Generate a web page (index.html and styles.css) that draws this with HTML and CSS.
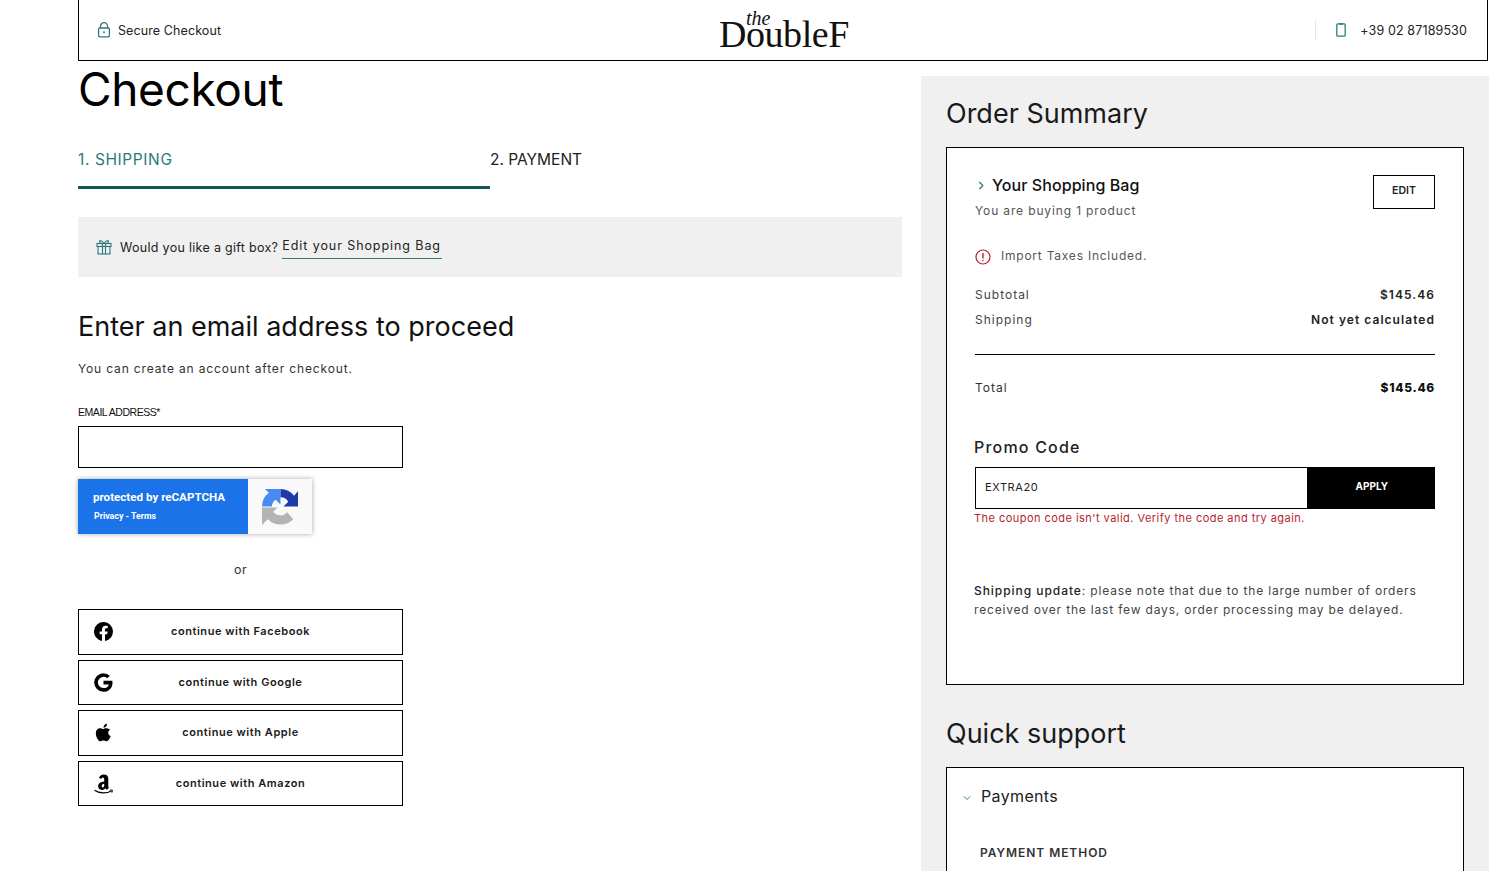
FILE: index.html
```html
<!DOCTYPE html>
<html lang="en">
<head>
<meta charset="utf-8">
<title>Checkout</title>
<link rel="stylesheet" href="styles.css">
</head>
<body>
<div class="page">
  <header class="topbar">
    <div class="secure">
      <svg class="ico-lock" viewBox="0 0 14 16" width="14" height="16"><path d="M3.5 6V4.2a3.5 3.5 0 0 1 7 0V6" fill="none" stroke="#2f7a7a" stroke-width="1.3"/><rect x="1.6" y="6" width="10.8" height="8.8" rx="1" fill="none" stroke="#2f7a7a" stroke-width="1.3"/><circle cx="7" cy="10.3" r="1" fill="#2f7a7a"/></svg>
      <span>Secure Checkout</span>
    </div>
    <div class="logo"><span class="logo-the">the</span><span class="logo-main">DoubleF</span></div>
    <div class="phone">
      <svg class="ico-phone" viewBox="0 0 10 14" width="10" height="14"><rect x="0.8" y="0.8" width="8.4" height="12.4" rx="1" fill="none" stroke="#2f7a7a" stroke-width="1.3"/><path d="M3 1h4" stroke="#2f7a7a" stroke-width="1.5"/></svg>
      <span>+39 02 87189530</span>
    </div>
  </header>

  <div class="columns">
    <main class="left">
      <h1 class="title">Checkout</h1>
      <nav class="tabs">
        <div class="tab tab-active">1. SHIPPING</div>
        <div class="tab">2. PAYMENT</div>
      </nav>
      <div class="gift">
        <svg viewBox="0 0 16 16" width="16" height="16"><g fill="none" stroke="#2f7a7a" stroke-width="1.1"><rect x="1" y="4.5" width="14" height="3"/><rect x="2" y="7.5" width="12" height="7.5"/><path d="M6.5 4.5V15M9.5 4.5V15"/><path d="M8 4.5C6 1 3.5 1 3.5 2.8S6 4.5 8 4.5zM8 4.5c2-3.5 4.500-3.500 4.500-1.700S10 4.500 8 4.500z"/></g></svg>
        <span class="gift-q">Would you like a gift box?</span>
        <a class="gift-link">Edit your Shopping Bag</a>
      </div>
      <h2 class="email-h">Enter an email address to proceed</h2>
      <p class="email-sub">You can create an account after checkout.</p>
      <div class="form">
        <label class="email-label">EMAIL ADDRESS*</label>
        <div class="email-input"></div>
        <div class="recaptcha">
          <div class="rc-blue">
            <div class="rc-t1">protected by reCAPTCHA</div>
            <div class="rc-t2">Privacy - Terms</div>
          </div>
          <div class="rc-logo">
            <svg viewBox="0 0 38 38" width="37" height="39">
              <path d="M0 19A18 18 0 0 1 7 5L3 1H19V17L14 12A9.500 9.500 0 0 0 10 19Z" fill="#4a8af4"/>
              <path d="M19 1A18 18 0 0 1 33 8L37 3V19H22L27 14A9.500 9.500 0 0 0 19 9.500Z" fill="#1c3aa9"/>
              <path d="M0 20H16L11.500 24.500A9.500 9.500 0 0 0 26 25L32 32A18 18 0 0 1 6 32L0 38Z" fill="#b4b4b4"/>
            </svg>
          </div>
        </div>
        <div class="or">or</div>
        <div class="socials">
          <div class="social">
            <svg class="s-ico" viewBox="0 0 24 24" width="19" height="19"><path d="M24 12a12 12 0 1 0-13.900 11.900v-8.400H7.100V12h3V9.400c0-3 1.800-4.700 4.500-4.700 1.300 0 2.700.2 2.700.2v3h-1.500c-1.500 0-2 .9-2 1.900V12h3.400l-.5 3.500h-2.800v8.400A12 12 0 0 0 24 12z" fill="#000"/></svg>
            <span>continue with Facebook</span>
          </div>
          <div class="social">
            <svg class="s-ico" viewBox="1 1 22 22" width="19" height="19"><path d="M12 10v4.200h6.300c-.6 2.800-3 4.300-6.300 4.300a6.500 6.500 0 1 1 4.300-11.400l3-3A10.800 10.800 0 0 0 12 1.200a10.800 10.800 0 1 0 0 21.600c6.200 0 10.400-4.400 10.400-10.500 0-.8-.1-1.600-.2-2.300z" fill="#000"/></svg>
            <span>continue with Google</span>
          </div>
          <div class="social">
            <svg class="s-ico" viewBox="1 0 22 24" width="19" height="19"><path d="M16.400 1c.1 1.300-.4 2.500-1.100 3.400-.8.900-2 1.600-3.200 1.500-.2-1.200.4-2.500 1.100-3.300C14 1.700 15.300 1 16.400 1zM20.300 8.200c-1.500 1-2.300 2.300-2.300 4 0 2 1.100 3.500 3.100 4.300-.4 1.300-1 2.500-1.800 3.700-1.100 1.600-2.200 2.900-3.700 2.900s-2-.9-3.700-.9-2.300.9-3.700.9c-1.500 0-2.600-1.400-3.700-3C3.200 18 2.300 15.300 2.300 12.800c0-4 2.600-6.200 5.200-6.200 1.400 0 2.600.9 3.500.9s2.300-1 4-1c1.900 0 3.900.8 5.300 1.700z" fill="#000"/></svg>
            <span>continue with Apple</span>
          </div>
          <div class="social">
            <svg class="s-ico" viewBox="1.500 0.500 21 22" width="19" height="20"><path d="M7 4.700C7.700 2.500 9.600 1 12.300 1c3.200 0 5 1.700 5 4.600v8.700c0 .8.300 1.100.8 1.400l-2.500 2.200c-.8-.6-1.200-1.100-1.500-1.800-1 1.300-2.200 2-3.800 2-2.500 0-4.200-1.500-4.200-4 0-3.500 3-5 6.700-5.300V7.200c0-1.500-.5-2.800-1.500-2.800-.9 0-1.400.7-1.600 1.500zM12.800 11.300c-2 .3-2.800 1.200-2.800 2.500 0 1 .5 1.700 1.300 1.700 1 0 1.500-1.200 1.500-2.800z" fill="#000"/><path d="M2 18.500c5.500 3.800 13.500 3.800 19 .4" fill="none" stroke="#000" stroke-width="1.300"/><path d="M19 18.200l3 .2-.8 2.800" fill="none" stroke="#000" stroke-width="1"/></svg>
            <span>continue with Amazon</span>
          </div>
        </div>
      </div>
    </main>

    <aside class="panel">
      <h2 class="panel-h">Order Summary</h2>
      <section class="card summary">
        <div class="bag-row">
          <div class="bag-info">
            <div class="bag-title">
              <svg viewBox="0 0 8 10" width="7" height="9"><path d="M1.500 1l4 4-4 4" fill="none" stroke="#2f7a7a" stroke-width="1.500"/></svg>
              <span>Your Shopping Bag</span>
            </div>
            <div class="bag-sub">You are buying 1 product</div>
          </div>
          <div class="edit-btn">EDIT</div>
        </div>
        <div class="taxes">
          <svg viewBox="0 0 16 16" width="16" height="16"><circle cx="8" cy="8" r="7" fill="none" stroke="#b3262e" stroke-width="1.200"/><path d="M8 4v5.500" stroke="#b3262e" stroke-width="1.400"/><circle cx="8" cy="11.500" r=".8" fill="#b3262e"/></svg>
          <span>Import Taxes Included.</span>
        </div>
        <div class="line"><span>Subtotal</span><b>$145.46</b></div>
        <div class="line line-2"><span>Shipping</span><b>Not yet calculated</b></div>
        <div class="rule"></div>
        <div class="line total"><span>Total</span><b>$145.46</b></div>
        <h3 class="promo-h">Promo Code</h3>
        <div class="promo">
          <div class="promo-input">EXTRA20</div>
          <div class="promo-btn">APPLY</div>
        </div>
        <p class="promo-err">The coupon code isn't valid. Verify the code and try again.</p>
        <p class="update"><b>Shipping update</b>: please note that due to the large number of orders received over the last few days, order processing may be delayed.</p>
      </section>
      <h2 class="panel-h support-h">Quick support</h2>
      <section class="card support">
        <div class="pay-row">
          <svg viewBox="0 0 8 6" width="8" height="6"><path d="M1 1.500l3 3 3-3" fill="none" stroke="#2f7a7a" stroke-width="1"/></svg>
          <span>Payments</span>
        </div>
        <div class="pay-method">PAYMENT METHOD</div>
      </section>
    </aside>
  </div>
</div>
</body>
</html>
```
FILE: styles.css
```css
* { box-sizing: border-box; }
html, body { margin: 0; padding: 0; height: 871px; overflow: hidden; background: #fff; }
body { font-family: Inter, "Liberation Sans", sans-serif; color: #111; }
h1, h2, h3, p { margin: 0; font-weight: 400; }

.page { width: 1489px; }

.topbar {
  margin-left: 78px;
  width: 1410px;
  height: 61px;
  border: 1px solid #000;
  border-top: 0;
  display: flex;
  align-items: center;
  justify-content: space-between;
  padding: 0 20px 0 18px;
  position: relative;
}
.secure { display: flex; align-items: center; gap: 7px; font-size: 12.500px; letter-spacing: .1px; color: #222; }
.phone {
  display: flex; align-items: center; gap: 14px;
  font-size: 12.500px; letter-spacing: .13px; color: #222;
  border-left: 1px solid #e6e6e6;
  height: 20px;
  padding-left: 20px;
}
.logo {
  position: absolute; left: 640px; top: 9px;
  width: 132px; height: 44px;
  font-family: "Liberation Serif", serif; color: #111;
}
.logo-main { position: absolute; left: 0; top: 6px; font-size: 38px; line-height: 38px; letter-spacing: -0.450px; }
.logo-the { position: absolute; left: 27px; top: -1px; font-size: 20px; line-height: 20px; font-style: italic; }

.columns { display: flex; align-items: flex-start; }
.left { margin-left: 78px; width: 824px; }
.title { font-size: 46px; line-height: 56px; color: #000; letter-spacing: -0.350px; }

.tabs { display: flex; margin-top: 22px; }
.tab { width: 412px; height: 50px; padding-top: 11px; font-size: 15.500px; line-height: 20px; color: #222; }
.tab-active { color: #2a7a7a; letter-spacing: .6px; border-bottom: 3px solid #0e5a5a; }

.gift {
  margin-top: 28px;
  height: 60px;
  background: #f0f0f0;
  display: flex; align-items: center;
  padding-left: 18px;
}
.gift-q { margin-left: 8px; font-size: 12.500px; color: #222; letter-spacing: 0.300px; }
.gift-link {
  margin-left: 4px; font-size: 12.500px; letter-spacing: 0.920px; color: #222;
  border-bottom: 1px solid #2f7a7a;
  padding: 0 1px 5px 0; position: relative; top: 1px;
}

.email-h { margin-top: 33px; font-size: 27px; line-height: 34px; color: #111; }
.email-sub { margin-top: 17px; font-size: 12px; line-height: 16px; letter-spacing: 0.850px; color: #333; }

.form { width: 325px; }
.email-label { display: block; margin-top: 28px; font-family: "Liberation Sans", sans-serif; font-size: 10.500px; line-height: 14px; letter-spacing: -0.450px; color: #111; }
.email-input { margin-top: 7px; height: 42px; border: 1px solid #000; }

.recaptcha {
  margin-top: 11px;
  width: 234px; height: 55px;
  display: flex;
  box-shadow: 0 0 5px rgba(0,0,0,.35);
}
.rc-blue { width: 170px; background: #1a73e8; color: #fff; padding: 11px 0 0 15px; font-family: Roboto, sans-serif; }
.rc-t1 { font-size: 11.600px; line-height: 14px; font-weight: 700; }
.rc-t2 { margin-top: 6px; padding-left: 1px; font-size: 8.800px; line-height: 12px; font-weight: 700; }
.rc-logo { flex: 1; background: #f9f9f9; display: flex; align-items: center; justify-content: center; }

.or { margin-top: 28px; text-align: center; font-size: 12.500px; line-height: 16px; letter-spacing: 0.500px; color: #333; }

.socials { margin-top: 31px; display: flex; flex-direction: column; gap: 5px; }
.social {
  height: 45.500px;
  border: 1px solid #000;
  display: flex; align-items: center; justify-content: center;
  position: relative;
  padding-bottom: 1px;
  font-size: 11px; font-weight: 600; letter-spacing: 0.550px; color: #1a1a1a;
}
.s-ico { position: absolute; left: 15px; top: 12px; }

.panel { margin-left: 19px; margin-top: 15px; width: 568px; height: 795px; background: #f0f0f0; padding: 20px 25px 0; overflow: hidden; }
.panel-h { font-size: 27px; line-height: 36px; color: #1a1a1a; }
.card { background: #fff; border: 1px solid #000; width: 518px; }
.summary { margin-top: 15px; height: 538px; padding: 27px 28px 0; }

.bag-row { display: flex; justify-content: space-between; }
.bag-title { display: flex; align-items: center; gap: 7px; font-size: 16px; line-height: 20px; font-weight: 500; letter-spacing: .07px; color: #111; padding-left: 3px; }
.bag-sub { margin-top: 8px; font-size: 12px; line-height: 16px; letter-spacing: 0.860px; color: #555; }
.edit-btn { width: 62px; height: 34px; border: 1px solid #000; font-size: 10.500px; font-weight: 600; display: flex; justify-content: center; padding-top: 8px; color: #222; }

.taxes { margin-top: 29px; display: flex; align-items: center; gap: 10px; font-size: 12px; line-height: 16px; letter-spacing: .77px; color: #555; }
.taxes svg { position: relative; top: 1px; }

.line { display: flex; justify-content: space-between; font-size: 12px; line-height: 16px; letter-spacing: 1px; color: #444; margin-top: 23px; }
.line b { font-weight: 600; color: #222; letter-spacing: 1.050px; }
.line-2 { margin-top: 9px; }
.rule { margin-top: 26px; height: 1px; background: #000; }
.total { margin-top: 25px; color: #333; }
.total b { font-weight: 800; color: #111; font-size: 12px; letter-spacing: .7px; }
.promo-h { margin-top: 41px; margin-left: -1px; font-size: 16px; line-height: 20px; font-weight: 500; letter-spacing: 1.200px; color: #222; }
.promo { margin-top: 10px; display: flex; height: 42px; }
.promo-input { width: 332px; border: 1px solid #000; border-right: 0; padding: 12px 9px 0; font-size: 11px; line-height: 14px; letter-spacing: .6px; color: #222; }
.promo-btn { flex: 1; background: #000; color: #fff; font-size: 10px; font-weight: 700; text-align: right; padding: 13px 47px 0 0; }
.promo-err { margin-top: 2px; margin-left: -1px; font-size: 11px; line-height: 15px; letter-spacing: .46px; color: #b3262e; }
.update { margin-top: 55px; margin-left: -1px; width: 450px; font-size: 12px; line-height: 19px; letter-spacing: .82px; color: #444; }
.update b { font-weight: 500; color: #222; letter-spacing: .95px; }

.support-h { margin-top: 31px; }
.support { margin-top: 15px; height: 200px; padding: 18px 16px 0; }
.pay-row { display: flex; align-items: center; gap: 10px; font-size: 16px; line-height: 20px; letter-spacing: .35px; color: #222; }
.pay-row svg { position: relative; top: 2px; }
.pay-method { margin-top: 39px; padding-left: 17px; font-size: 12px; line-height: 16px; font-weight: 600; letter-spacing: .95px; color: #333; }
```
